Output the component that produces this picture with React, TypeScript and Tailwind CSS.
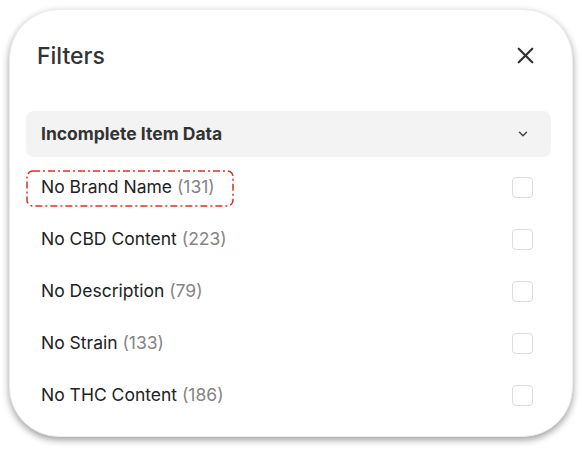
import { X, ChevronDown } from "lucide-react";

const rows = [
  { label: "No Brand Name", count: 131 },
  { label: "No CBD Content", count: 223 },
  { label: "No Description", count: 79 },
  { label: "No Strain", count: 133 },
  { label: "No THC Content", count: 186 },
];

export default function App() {
  return (
    <div className="w-[582px] h-[449px] bg-white pt-[9px] pl-[9px] font-['Inter',sans-serif]">
      {/* card */}
      <div className="w-[564px] h-[428px] rounded-[50px] bg-white border border-[#ececec] shadow-[0_3px_7px_rgba(0,0,0,0.38)]">
        {/* header */}
        <div className="flex items-start justify-between pl-[27px] pr-[33px] pt-[30px] h-[96px]">
          <h2 className="text-[23px] leading-[32px] font-medium text-[#333]">Filters</h2>
          <X size={27} strokeWidth={2} className="text-[#333] mt-[2px]" />
        </div>

        {/* section */}
        <div className="ml-[16px] mr-[21px] mt-[5px]">
          <div className="flex items-center justify-between h-[46px] rounded-[8px] bg-[#f3f3f3] pl-[15px] pr-[21px]">
            <span className="text-[17.5px] font-bold text-[#333]">Incomplete Item Data</span>
            <ChevronDown size={14} strokeWidth={2.5} className="text-[#444]" />
          </div>

          <div className="mt-[4px] flex flex-col">
            {rows.map((r, i) => (
              <div key={i} className="relative flex items-center justify-between h-[52px] pl-[15px] pr-[18px]">
                <span className="text-[17.5px] text-[#222]">
                  {r.label} <span className="text-[#858585]">({r.count})</span>
                </span>
                <span className="w-[21px] h-[21px] rounded-[4px] border-[1.5px] border-[#dcdcdc] bg-white" />
                {i === 0 && (
                  <svg className="absolute left-0 top-[9px]" width="208" height="37" viewBox="0 0 208 37">
                    <rect
                      x="1"
                      y="1"
                      width="206"
                      height="35"
                      rx="6"
                      fill="none"
                      stroke="#e0301e"
                      strokeWidth="1.5"
                      strokeDasharray="7 3 2 3"
                    />
                  </svg>
                )}
              </div>
            ))}
          </div>
        </div>
      </div>
    </div>
  );
}
